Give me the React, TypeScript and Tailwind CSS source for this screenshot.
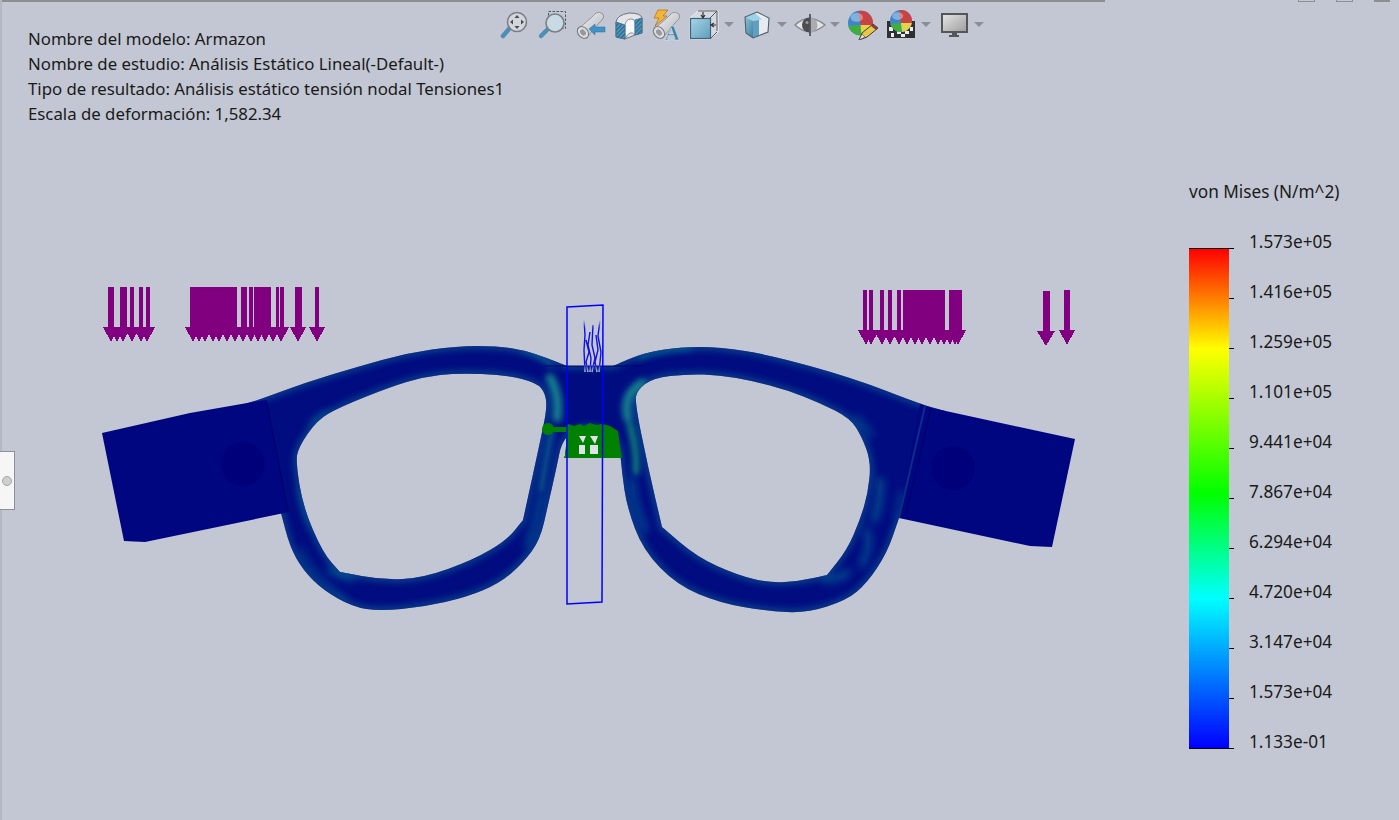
const fontClass = "font-['Noto_Sans','Open_Sans',sans-serif]";

type Pt = [number, number];

// closed curve through the midpoints of the listed points
function smooth(pts: Pt[]): string {
  const mid = (a: Pt, b: Pt): Pt => [(a[0] + b[0]) / 2, (a[1] + b[1]) / 2];
  const start = mid(pts[pts.length - 1], pts[0]);
  let d = `M${start[0]},${start[1]}`;
  pts.forEach((p, i) => {
    const m = mid(p, pts[(i + 1) % pts.length]);
    d += ` Q${p[0]},${p[1]} ${m[0]},${m[1]}`;
  });
  return d + 'Z';
}

const frameOuter: Pt[] = [
  [240, 405], [240, 405], [253, 402], [307, 382], [357, 367], [407, 353], [457, 346], [497, 346], [523, 350], [547, 358], [567, 366], [567, 366],
  [613, 366], [613, 366], [643, 353], [680, 347], [720, 347], [770, 355], [853, 378], [920, 404], [945, 411], [945, 411], [915, 510], [915, 510], [899, 518], [899, 518],
  [887, 553], [867, 583], [847, 600], [807, 613], [767, 611], [720, 603], [677, 585], [643, 550], [627, 507], [622, 473],
  [619, 440], [590, 424], [563, 436], [556, 470], [548, 505], [540, 540], [523, 563], [500, 583], [467, 597], [423, 607],
  [380, 611], [353, 607], [323, 590], [303, 570], [290, 547], [281, 513], [281, 513], [265, 505], [265, 505],
];
const lensLeft: Pt[] = [
  [547, 407], [545, 393], [537, 383], [507, 375], [457, 373], [423, 377], [390, 387], [340, 407], [317, 420], [298, 448], [296, 463],
  [303, 507], [323, 553], [340, 572], [340, 572], [383, 580], [423, 578], [473, 560], [507, 540], [523, 520], [523, 520], [542, 433],
];
const lensRight: Pt[] = [
  [635, 403], [637, 390], [653, 378], [687, 374], [720, 375], [753, 381], [787, 390], [820, 403], [850, 418], [862, 437], [871, 462],
  [868, 493], [860, 520], [847, 550], [827, 575], [827, 575], [800, 581], [770, 583], [737, 575], [697, 557], [662, 527], [662, 527], [648, 467],
];
const framePath = `${smooth(frameOuter)} ${smooth(lensLeft)} ${smooth(lensRight)}`;

// teal stress around the bridge: path, colour, width
const bridgeStreaks: [string, string, number][] = [
  ['M550,378 Q560,395 557,418', '#12828f', 9],
  ['M628,418 Q622,395 642,383', '#12828f', 9],
  ['M552,430 Q546,460 541,490', '#0f6a90', 5],
  ['M630,425 Q637,450 636,472', '#0c8f78', 6],
  ['M524,349 Q540,355 552,366', '#0d6490', 4],
  ['M640,358 Q655,350 690,348', '#0d6490', 4],
];
// fainter tint further along the rims
const rimStreaks: [string, string, number][] = [
  ['M632,480 Q634,505 645,530', '#0a4f90', 6],
  ['M541,495 Q536,525 528,545', '#0a4f90', 6],
  ['M880,480 Q881,500 874,520', '#0a5a90', 6],
  ['M902,492 Q900,505 897,515', '#0d6490', 3],
  ['M825,580 Q838,580 848,572', '#0d6490', 5],
  ['M855,418 Q865,425 870,435', '#0a4f90', 5],
  ['M866,530 Q872,545 862,565', '#0a4f90', 6],
  ['M330,570 Q342,575 352,578', '#0d6490', 5],
  ['M302,490 Q305,510 312,525', '#0a4f90', 5],
  ['M312,424 Q318,418 326,414', '#0a4f90', 5],
  ['M300,550 Q315,580 345,600', '#0a458c', 5],
];

// left and right load clusters: shaft x, shaft width
const shaftsLeft: [number, number][] = [
  [108, 6], [120, 7], [130, 4], [139, 4], [146, 4], [190, 47], [241, 6], [249, 4], [254, 17], [276, 3], [280, 4], [295, 7], [315, 4],
];
const tipsLeft = [111, 117, 123, 132, 141, 147, 193, 199, 205, 213, 219, 227, 235, 243, 251, 258, 265, 273, 281, 298, 317];
const shaftsRight: [number, number][] = [
  [863, 4], [869, 4], [880, 4], [888, 4], [897, 4], [903, 42], [949, 13], [1064, 6],
];
const tipsRight = [866, 871, 882, 890, 899, 907, 915, 922, 930, 938, 944, 950, 955, 958, 1067];

function Arrow({ x, base, tip, half = 8 }: { x: number; base: number; tip: number; half?: number }) {
  return <polygon points={`${x - half},${base} ${x + half},${base} ${x},${tip}`} />;
}

function Model() {
  return (
    <svg className="absolute inset-0" width="1399" height="820" viewBox="0 0 1399 820">
      <defs>
        <clipPath id="frameClip">
          <path d={framePath} clipRule="evenodd" />
        </clipPath>
        <filter id="soft" x="-30%" y="-30%" width="160%" height="160%">
          <feGaussianBlur stdDeviation="3" />
        </filter>
        <filter id="softer" x="-20%" y="-20%" width="140%" height="140%">
          <feGaussianBlur stdDeviation="4.5" />
        </filter>
        <filter id="softEdge" x="-10%" y="-10%" width="120%" height="120%">
          <feGaussianBlur stdDeviation="3" />
        </filter>
        <linearGradient id="squiggleFade" x1="0" y1="0" x2="0" y2="1">
          <stop offset="0" stopColor="#c2c7d3" />
          <stop offset="0.15" stopColor="#1010e0" />
          <stop offset="0.85" stopColor="#1010e0" />
          <stop offset="1" stopColor="#c2c7d3" />
        </linearGradient>
      </defs>

      {/* frame */}
      <path d={framePath} fill="#000c80" fillRule="evenodd" />
      <g clipPath="url(#frameClip)">
        <path d={framePath} fill="none" stroke="#0a5690" strokeWidth="8" opacity="0.6" filter="url(#softEdge)" />
        <g filter="url(#softer)" fill="none" strokeLinecap="round">
          {rimStreaks.map(([d, c, w], i) => (
            <path key={i} d={d} stroke={c} strokeWidth={w} />
          ))}
        </g>
        <g filter="url(#soft)" fill="none" strokeLinecap="round">
          {bridgeStreaks.map(([d, c, w], i) => (
            <path key={i} d={d} stroke={c} strokeWidth={w} />
          ))}
        </g>
      </g>

      {/* temples */}
      <polygon points="102,433 190,413 253,402 267,400 289,512 145,542 124,541" fill="#000680" />
      <polygon points="920,404 932,408 1075,439 1052,547 1030,546 899,518" fill="#000680" />
      <circle cx="243" cy="464" r="22" fill="#00007a" />
      <circle cx="953" cy="468" r="22" fill="#00007a" />
      <line x1="267" y1="403" x2="288" y2="512" stroke="#00006c" strokeWidth="1" />
      <line x1="925" y1="406" x2="899" y2="518" stroke="#0a2f88" strokeWidth="2" />
      <line x1="931" y1="408" x2="905" y2="519" stroke="#00006c" strokeWidth="1" />
      <line x1="544" y1="366" x2="643" y2="366" stroke="#00006c" strokeWidth="1" />

      {/* mesh control marks */}
      <g fill="#008000">
        <circle cx="548" cy="429" r="6" />
        <rect x="552" y="427" width="16" height="5" />
        <path d="M566,426 L568,424 L574,426 L580,424 L584,426 L590,423 L596,425 L602,424 L610,426 L618,431 L620,446 L622,458 L564,458 L566,446Z" />
      </g>
      <g fill="#dfe2e8">
        <polygon points="579,436 586,436 583,443" />
        <rect x="579" y="445" width="6" height="9" />
        <polygon points="590,436 598,436 595,444" />
        <rect x="590" y="445" width="8" height="9" />
        <rect x="563" y="446" width="2" height="10" fill="#c2c7d3" />
      </g>

      {/* section plane */}
      <polygon points="567,307 603,305 602,602 567,604" fill="none" stroke="#0000ff" strokeWidth="1.5" />
      <g fill="none" stroke="url(#squiggleFade)" strokeWidth="1.4">
        <path d="M584,320 L585,335 L584,350 L585,372 M586,340 L589,352 L586,362 L588,372 M590,332 L588,345 L591,358 L590,372 M593,325 L592,345 L595,358 L592,372 M596,335 L598,350 L595,362 L597,372 M600,320 L598,336 L601,352 L599,372" />
      </g>

      {/* load arrows */}
      <g fill="#800080" shapeRendering="crispEdges">
        {shaftsLeft.map(([x, w], i) => (
          <rect key={i} x={x} y={287} width={w} height={42} />
        ))}
        {tipsLeft.map((x, i) => (
          <Arrow key={i} x={x} base={327} tip={342} />
        ))}
        {shaftsRight.map(([x, w], i) => (
          <rect key={i} x={x} y={290} width={w} height={42} />
        ))}
        {tipsRight.map((x, i) => (
          <Arrow key={i} x={x} base={330} tip={345} />
        ))}
        <rect x={1043} y={291} width={7} height={42} />
        <Arrow x={1046} base={331} tip={346} half={9} />
      </g>
    </svg>
  );
}

function Caret() {
  return (
    <svg className="-ml-[2px] mr-[1px] shrink-0" width="10" height="32" viewBox="0 0 10 32">
      <polygon points="0,14 10,14 5,19" fill="#8b8e96" />
    </svg>
  );
}

function Tube({ id }: { id: string }) {
  return (
    <g>
      <defs>
        <linearGradient id={id} x1="0" y1="0" x2="1" y2="1">
          <stop offset="0" stopColor="#f7f7f8" />
          <stop offset="1" stopColor="#aeb0b5" />
        </linearGradient>
      </defs>
      <path d="M4,21 L17,10 L22,5 Q25,3 29,6 Q31,9 28,12 L24,16 L14,28 Q10,31 7,29 Z" fill={`url(#${id})`} stroke="#84878d" strokeWidth="0.8" />
      <ellipse cx="9" cy="24.5" rx="5" ry="6.5" transform="rotate(-40 9 24.5)" fill="#dcdcde" stroke="#7b7d83" strokeWidth="1.1" />
      <ellipse cx="9" cy="24.5" rx="2.5" ry="3.4" transform="rotate(-40 9 24.5)" fill="#96989d" />
    </g>
  );
}

function ZoomFit() {
  return (
    <svg width="32" height="32" viewBox="0 0 32 32" className="shrink-0">
      <line x1="5" y1="28" x2="11" y2="21" stroke="#4b8fb6" strokeWidth="4.5" strokeLinecap="round" />
      <circle cx="19" cy="14" r="9.5" fill="#d3d6dc" stroke="#7b7e85" strokeWidth="1.6" />
      <g fill="#4a4b50">
        <polygon points="19,7 16.5,10 21.5,10" />
        <polygon points="19,21 16.5,18 21.5,18" />
        <polygon points="12,14 15,11.5 15,16.5" />
        <polygon points="26,14 23,11.5 23,16.5" />
      </g>
    </svg>
  );
}

function ZoomArea() {
  return (
    <svg width="32" height="32" viewBox="0 0 32 32" className="shrink-0">
      <rect x="12.5" y="3.5" width="17" height="17" fill="none" stroke="#55575c" strokeWidth="1" strokeDasharray="2.5 1.5" />
      <line x1="5" y1="28" x2="11" y2="22" stroke="#4b8fb6" strokeWidth="4.5" strokeLinecap="round" />
      <circle cx="19" cy="15" r="9" fill="#c8dae4" stroke="#7b7e85" strokeWidth="1.6" />
    </svg>
  );
}

function PrevView() {
  return (
    <svg width="32" height="32" viewBox="0 0 32 32" className="shrink-0">
      <Tube id="tubeA" />
      <polygon points="15,21 21,16 21,19 31,19 31,24 21,24 21,27" fill="#3f93c6" stroke="#2f6f96" strokeWidth="0.5" />
    </svg>
  );
}

function SectionView() {
  return (
    <svg width="32" height="32" viewBox="0 0 32 32" className="shrink-0">
      <defs>
        <pattern id="hatch" width="3" height="3" patternUnits="userSpaceOnUse" patternTransform="rotate(45)">
          <rect width="3" height="3" fill="#4f97bd" />
          <rect width="1.2" height="3" fill="#2b6485" />
        </pattern>
      </defs>
      <path d="M4,14 Q5,7 17,5 Q29,5 30,10 L30,25 L23,27 L13,31 L4,29 Z" fill="#e2e4e8" stroke="#6f7278" strokeWidth="1" />
      <path d="M13,31 L13,17 Q14,11 19,11 Q23,11 23,14 L23,27 Q18,21 13,31Z" fill="#f6f7f8" stroke="#777a80" strokeWidth="0.8" />
      <polygon points="4,14 13,17 13,31 4,29" fill="url(#hatch)" stroke="#3d6f8d" strokeWidth="0.8" />
      <polygon points="23,12 30,10 30,25 23,27" fill="url(#hatch)" stroke="#3d6f8d" strokeWidth="0.8" />
    </svg>
  );
}

function DynamicAnnotation() {
  return (
    <svg width="32" height="38" viewBox="0 0 32 38" className="shrink-0">
      <Tube id="tubeB" />
      <polygon points="8,2 18,2 13,8 17,8 5,18 9,10 4,10" fill="#f2b632" stroke="#b5651d" strokeWidth="0.7" />
      <text x="22" y="32" textAnchor="middle" fontSize="21" fontWeight="700" fill="#3d7ea6" stroke="#e8edf2" strokeWidth="0.4" fontFamily="'Liberation Serif', serif">A</text>
    </svg>
  );
}

function ViewOrientation() {
  return (
    <svg width="32" height="32" viewBox="0 0 32 32" className="shrink-0">
      <defs>
        <linearGradient id="cubeFront" x1="0" y1="0" x2="1" y2="1">
          <stop offset="0" stopColor="#a9d3e6" />
          <stop offset="1" stopColor="#5f9dbd" />
        </linearGradient>
      </defs>
      <polygon points="2,10 10,3 30,3 30,24 22,31 2,31" fill="#d6d9df" stroke="#f0f1f3" strokeWidth="1" />
      <path d="M10,3 H29 V23 M22,10 L29,3" fill="none" stroke="#55585e" strokeWidth="1" />
      <rect x="2.5" y="10.5" width="20" height="20" fill="url(#cubeFront)" stroke="#3d6679" strokeWidth="1.2" />
      <path d="M22,31 L29,24" stroke="#55585e" strokeWidth="1" />
      <path d="M15,4 V9 M13,7 L15,10 L17,7 M28,17 H23 M26,15 L23,17 L26,19" fill="none" stroke="#303236" strokeWidth="1.2" />
    </svg>
  );
}

function DisplayStyle() {
  return (
    <svg width="32" height="32" viewBox="0 0 32 32" className="shrink-0">
      <defs>
        <linearGradient id="cubeLeft" x1="0" y1="0" x2="1" y2="1">
          <stop offset="0" stopColor="#8cc3dc" />
          <stop offset="1" stopColor="#3f7f9e" />
        </linearGradient>
      </defs>
      <polygon points="16,4 28,10 12,13 4,9" fill="#9fd1e6" />
      <polygon points="16,4 28,10 21,11.5 14,5" fill="#e9edf0" />
      <polygon points="4,9 12,13 12,30 5,25" fill="url(#cubeLeft)" />
      <polygon points="12,13 28,10 27,24 12,30" fill="#e7eaee" />
      <polygon points="12,13 18,12 18,27.5 12,30" fill="#5f9fbf" />
      <polygon points="16,4 28,10 27,24 12,30 5,25 4,9" fill="none" stroke="#4f5f69" strokeWidth="1.1" />
    </svg>
  );
}

function HideShow() {
  return (
    <svg width="32" height="32" viewBox="0 0 32 32" className="shrink-0">
      <path d="M1,17 Q15,4 31,17 Q15,30 1,17Z" fill="#e2e4e7" stroke="#85878c" strokeWidth="1.3" />
      <circle cx="15.5" cy="17" r="7.5" fill="#4b4c50" />
      <path d="M16,9.5 A7.5,7.5 0 0 1 16,24.5Z" fill="#a9abaf" />
      <line x1="16" y1="6" x2="16" y2="28" stroke="#55565a" strokeWidth="1.8" />
      <circle cx="13" cy="14.5" r="1.5" fill="#9a9ca0" />
    </svg>
  );
}

function Ball({ cx, cy, r, id }: { cx: number; cy: number; r: number; id: string }) {
  return (
    <g>
      <defs>
        <clipPath id={id}>
          <circle cx={cx} cy={cy} r={r} />
        </clipPath>
      </defs>
      <g clipPath={`url(#${id})`}>
        <rect x={cx - r} y={cy - r} width={2 * r} height={2 * r} fill="#3f86c9" />
        <polygon points={`${cx},${cy + 2} ${cx - 2},${cy - r} ${cx + r},${cy - r} ${cx + r},${cy + 2}`} fill="#c84444" />
        <polygon points={`${cx},${cy + 2} ${cx - r},${cy + 3} ${cx - r},${cy + r} ${cx + 1},${cy + r}`} fill="#3fae3f" />
        <polygon points={`${cx},${cy + 2} ${cx + 1},${cy + r} ${cx + r},${cy + r} ${cx + r},${cy + 2}`} fill="#e3d24c" />
        <ellipse cx={cx - r * 0.3} cy={cy - r * 0.45} rx={r * 0.5} ry={r * 0.35} fill="#ffffff" opacity="0.35" />
      </g>
    </g>
  );
}

function EditAppearance() {
  return (
    <svg width="32" height="32" viewBox="0 0 32 32" className="shrink-0">
      <Ball cx={13.5} cy={15} r={12.5} id="ballA" />
      <polygon points="12,32 15,25 26,16 31,20 20,29" fill="#e8c84a" stroke="#3c3c3c" strokeWidth="1" />
      <polygon points="26,16 31,20 29,22 24,18" fill="#8a3a3a" />
      <polygon points="12,32 15,26 18,29" fill="#f2e6cf" stroke="#3c3c3c" strokeWidth="0.6" />
    </svg>
  );
}

function ApplyScene() {
  return (
    <svg width="32" height="32" viewBox="0 0 32 32" className="shrink-0">
      <rect x="2" y="13" width="28" height="17" fill="#2f3033" />
      <g fill="#eceded">
        <rect x="4" y="19" width="4" height="4" />
        <rect x="12" y="23" width="4" height="3" />
        <rect x="20" y="23" width="4" height="3" />
        <rect x="6" y="25" width="3" height="4" />
        <rect x="25" y="19" width="3" height="4" />
        <rect x="16" y="26" width="4" height="3" />
      </g>
      <Ball cx={16} cy={13} r={11} id="ballB" />
    </svg>
  );
}

function ViewSettings() {
  return (
    <svg width="32" height="32" viewBox="0 0 32 32" className="shrink-0">
      <defs>
        <linearGradient id="screen" x1="0" y1="0" x2="1" y2="1">
          <stop offset="0" stopColor="#e6e6e6" />
          <stop offset="1" stopColor="#9c9c9c" />
        </linearGradient>
      </defs>
      <rect x="4" y="6" width="25" height="18" fill="url(#screen)" stroke="#55565a" strokeWidth="2" />
      <rect x="14" y="25" width="5" height="2" fill="#55565a" />
      <rect x="11" y="27" width="10" height="2" fill="#55565a" />
    </svg>
  );
}

const infoLines = [
  'Nombre del modelo: Armazon',
  'Nombre de estudio: Análisis Estático Lineal(-Default-)',
  'Tipo de resultado: Análisis estático tensión nodal Tensiones1',
  'Escala de deformación: 1,582.34',
];

const legendLabels = [
  '1.573e+05', '1.416e+05', '1.259e+05', '1.101e+05', '9.441e+04', '7.867e+04',
  '6.294e+04', '4.720e+04', '3.147e+04', '1.573e+04', '1.133e-01',
];

export default function App() {
  return (
    <div className={`relative h-[820px] w-[1399px] overflow-hidden bg-[#c2c7d3] text-[#1a1a1a] ${fontClass}`}>
      <Model />

      {/* window edges */}
      <div className="absolute left-0 top-0 h-[2px] w-[1105px] bg-[#8e8f93]" />
      <div className="absolute left-0 top-0 h-full w-[2px] bg-[#b4b8c2]" />
      <div className="absolute right-[9px] top-0 flex gap-[21px]">
        <div className="h-[2px] w-[17px] border-x border-b border-[#8e8f93]" />
        <div className="h-[2px] w-[17px] border-x border-b border-[#8e8f93]" />
        <div className="h-[2px] w-[16px] bg-[#8e8f93]" />
      </div>

      {/* flyout handle */}
      <div className="absolute left-0 top-[451px] flex h-[59px] w-[15px] items-center justify-center border-y border-r border-[#8f9096] bg-[#f6f6f6]">
        <div className="h-[10px] w-[10px] rounded-full border border-[#a5a5a5] bg-[#cfcfcf]" />
      </div>

      {/* heads-up toolbar */}
      <div className="absolute left-[498px] top-[8px] flex items-start gap-[6px]">
        <ZoomFit />
        <ZoomArea />
        <PrevView />
        <SectionView />
        <DynamicAnnotation />
        <ViewOrientation />
        <Caret />
        <DisplayStyle />
        <Caret />
        <HideShow />
        <Caret />
        <EditAppearance />
        <ApplyScene />
        <Caret />
        <ViewSettings />
        <Caret />
      </div>

      <div className="relative flex h-full justify-between">
        <div className="pl-[28px] pt-[26px] text-[16.8px] leading-[25px]">
          {infoLines.map((line) => (
            <div key={line}>{line}</div>
          ))}
        </div>

        <div className="w-[210px] pt-[181px] text-[17.2px]">
          <div className="h-[22px] leading-[22px]">von Mises (N/m^2)</div>
          <div className="mt-[14px] flex">
            <div className="mt-[31px] h-[501px] w-[40px] border-y border-black bg-[linear-gradient(to_bottom,#ff0000_0%,#ffff00_20%,#00ff00_49%,#00ffff_70%,#0000ff_100%)]" />
            <div className="mt-[31px] flex h-[501px] w-[5px] flex-col border-b border-black">
              {legendLabels.slice(1).map((label) => (
                <div key={label} className="h-[50px] border-t border-black" />
              ))}
            </div>
            <div className="ml-[15px]">
              {legendLabels.map((label) => (
                <div key={label} className="h-[50px] leading-[50px]">
                  {label}
                </div>
              ))}
            </div>
          </div>
        </div>
      </div>
    </div>
  );
}
